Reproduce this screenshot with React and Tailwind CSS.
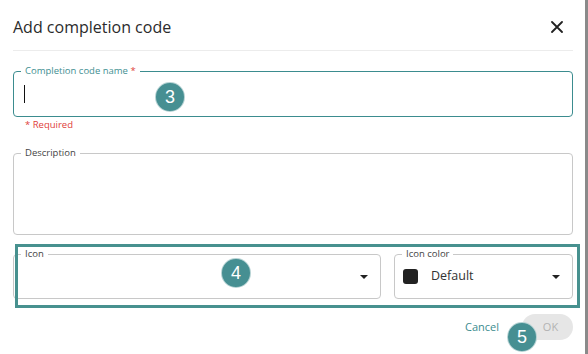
import React from 'react';

const font = { fontFamily: '"Open Sans", "Noto Sans", sans-serif' };
const badgeFont = { fontFamily: '"Liberation Sans", Arial, sans-serif' };

const Caret = () => (
  <svg width="8" height="4" viewBox="0 0 8 4" className="shrink-0">
    <polygon points="0,0 8,0 4,4" fill="#222" />
  </svg>
);

const Badge = ({ n, className }) => (
  <div
    style={badgeFont}
    className={`absolute w-[30px] h-[30px] rounded-full bg-[#468f92] border border-white/60 flex items-center justify-center text-white text-[18px] leading-none ${className}`}
  >
    {n}
  </div>
);

const App = () => {
  return (
    <div className="flex w-[588px] h-[354px] bg-white overflow-hidden" style={font}>
      <div className="relative flex-1 flex flex-col pl-[13px] pr-[12px]">
        {/* Header */}
        <div className="h-[51px] pt-[4px] flex items-center justify-between border-b border-[#ececec]">
          <h1 className="text-[16px] text-[#2b2b2b] font-normal">Add completion code</h1>
          <button className="mr-[10px] text-[#222]">
            <svg width="12" height="12" viewBox="0 0 12 12">
              <path d="M1 1L11 11M11 1L1 11" stroke="#222" strokeWidth="1.8" strokeLinecap="round" />
            </svg>
          </button>
        </div>

        {/* Completion code name */}
        <div className="relative mt-[20px] h-[46px] border border-[#3b8c8f] rounded-[4px] flex items-center pl-[10px]">
          <span className="absolute -top-[7px] left-[7px] px-[4px] bg-white text-[9.5px] leading-[12px] text-[#3f8f92]">
            Completion code name <span className="text-[#e0403a]">*</span>
          </span>
          <div className="w-px h-[18px] bg-[#111]" />
        </div>
        <div className="mt-[2px] pl-[12px] text-[9.5px] leading-[12px] text-[#e0403a]">* Required</div>

        {/* Description */}
        <div className="relative mt-[22px] h-[82px] border border-[#c8c8c8] rounded-[4px]">
          <span className="absolute -top-[7px] left-[7px] px-[4px] bg-white text-[9.5px] leading-[12px] text-[#444]">
            Description
          </span>
        </div>

        {/* Icon row */}
        <div className="mt-[19px] flex gap-[13px]">
          <div className="relative flex-1 h-[45px] border border-[#c8c8c8] rounded-[4px] flex items-center justify-end pr-[12px]">
            <span className="absolute -top-[7px] left-[7px] px-[4px] bg-white text-[9.5px] leading-[12px] text-[#444]">
              Icon
            </span>
            <Caret />
          </div>
          <div className="relative w-[179px] h-[45px] border border-[#c8c8c8] rounded-[4px] flex items-center pl-[8px] pr-[12px]">
            <span className="absolute -top-[7px] left-[7px] px-[4px] bg-white text-[9.5px] leading-[12px] text-[#444]">
              Icon color
            </span>
            <div className="w-[15px] h-[15px] rounded-[3px] bg-[#222]" />
            <span className="ml-[13px] flex-1 text-[12.5px] text-[#333]">Default</span>
            <Caret />
          </div>
        </div>

        {/* Footer */}
        <div className="mt-[15px] flex justify-end items-center">
          <button className="text-[11px] text-[#3b8c8f] mr-[23px]">Cancel</button>
          <button className="h-[26px] w-[51px] rounded-full bg-[#e6e6e6] text-[11px] text-[#b3b3b3] flex items-center justify-center pl-[6px]">
            OK
          </button>
        </div>

        {/* Annotation overlays */}
        <div className="absolute left-[15px] top-[244px] w-[565px] h-[64px] border-[3px] border-[#47918f] pointer-events-none" />
        <Badge n="3" className="left-[155px] top-[82px]" />
        <Badge n="4" className="left-[221px] top-[258px]" />
        <Badge n="5" className="left-[507px] top-[322px]" />
      </div>
      <div className="w-[3px] bg-[#8a8a8a]" />
    </div>
  );
};

export default App;
